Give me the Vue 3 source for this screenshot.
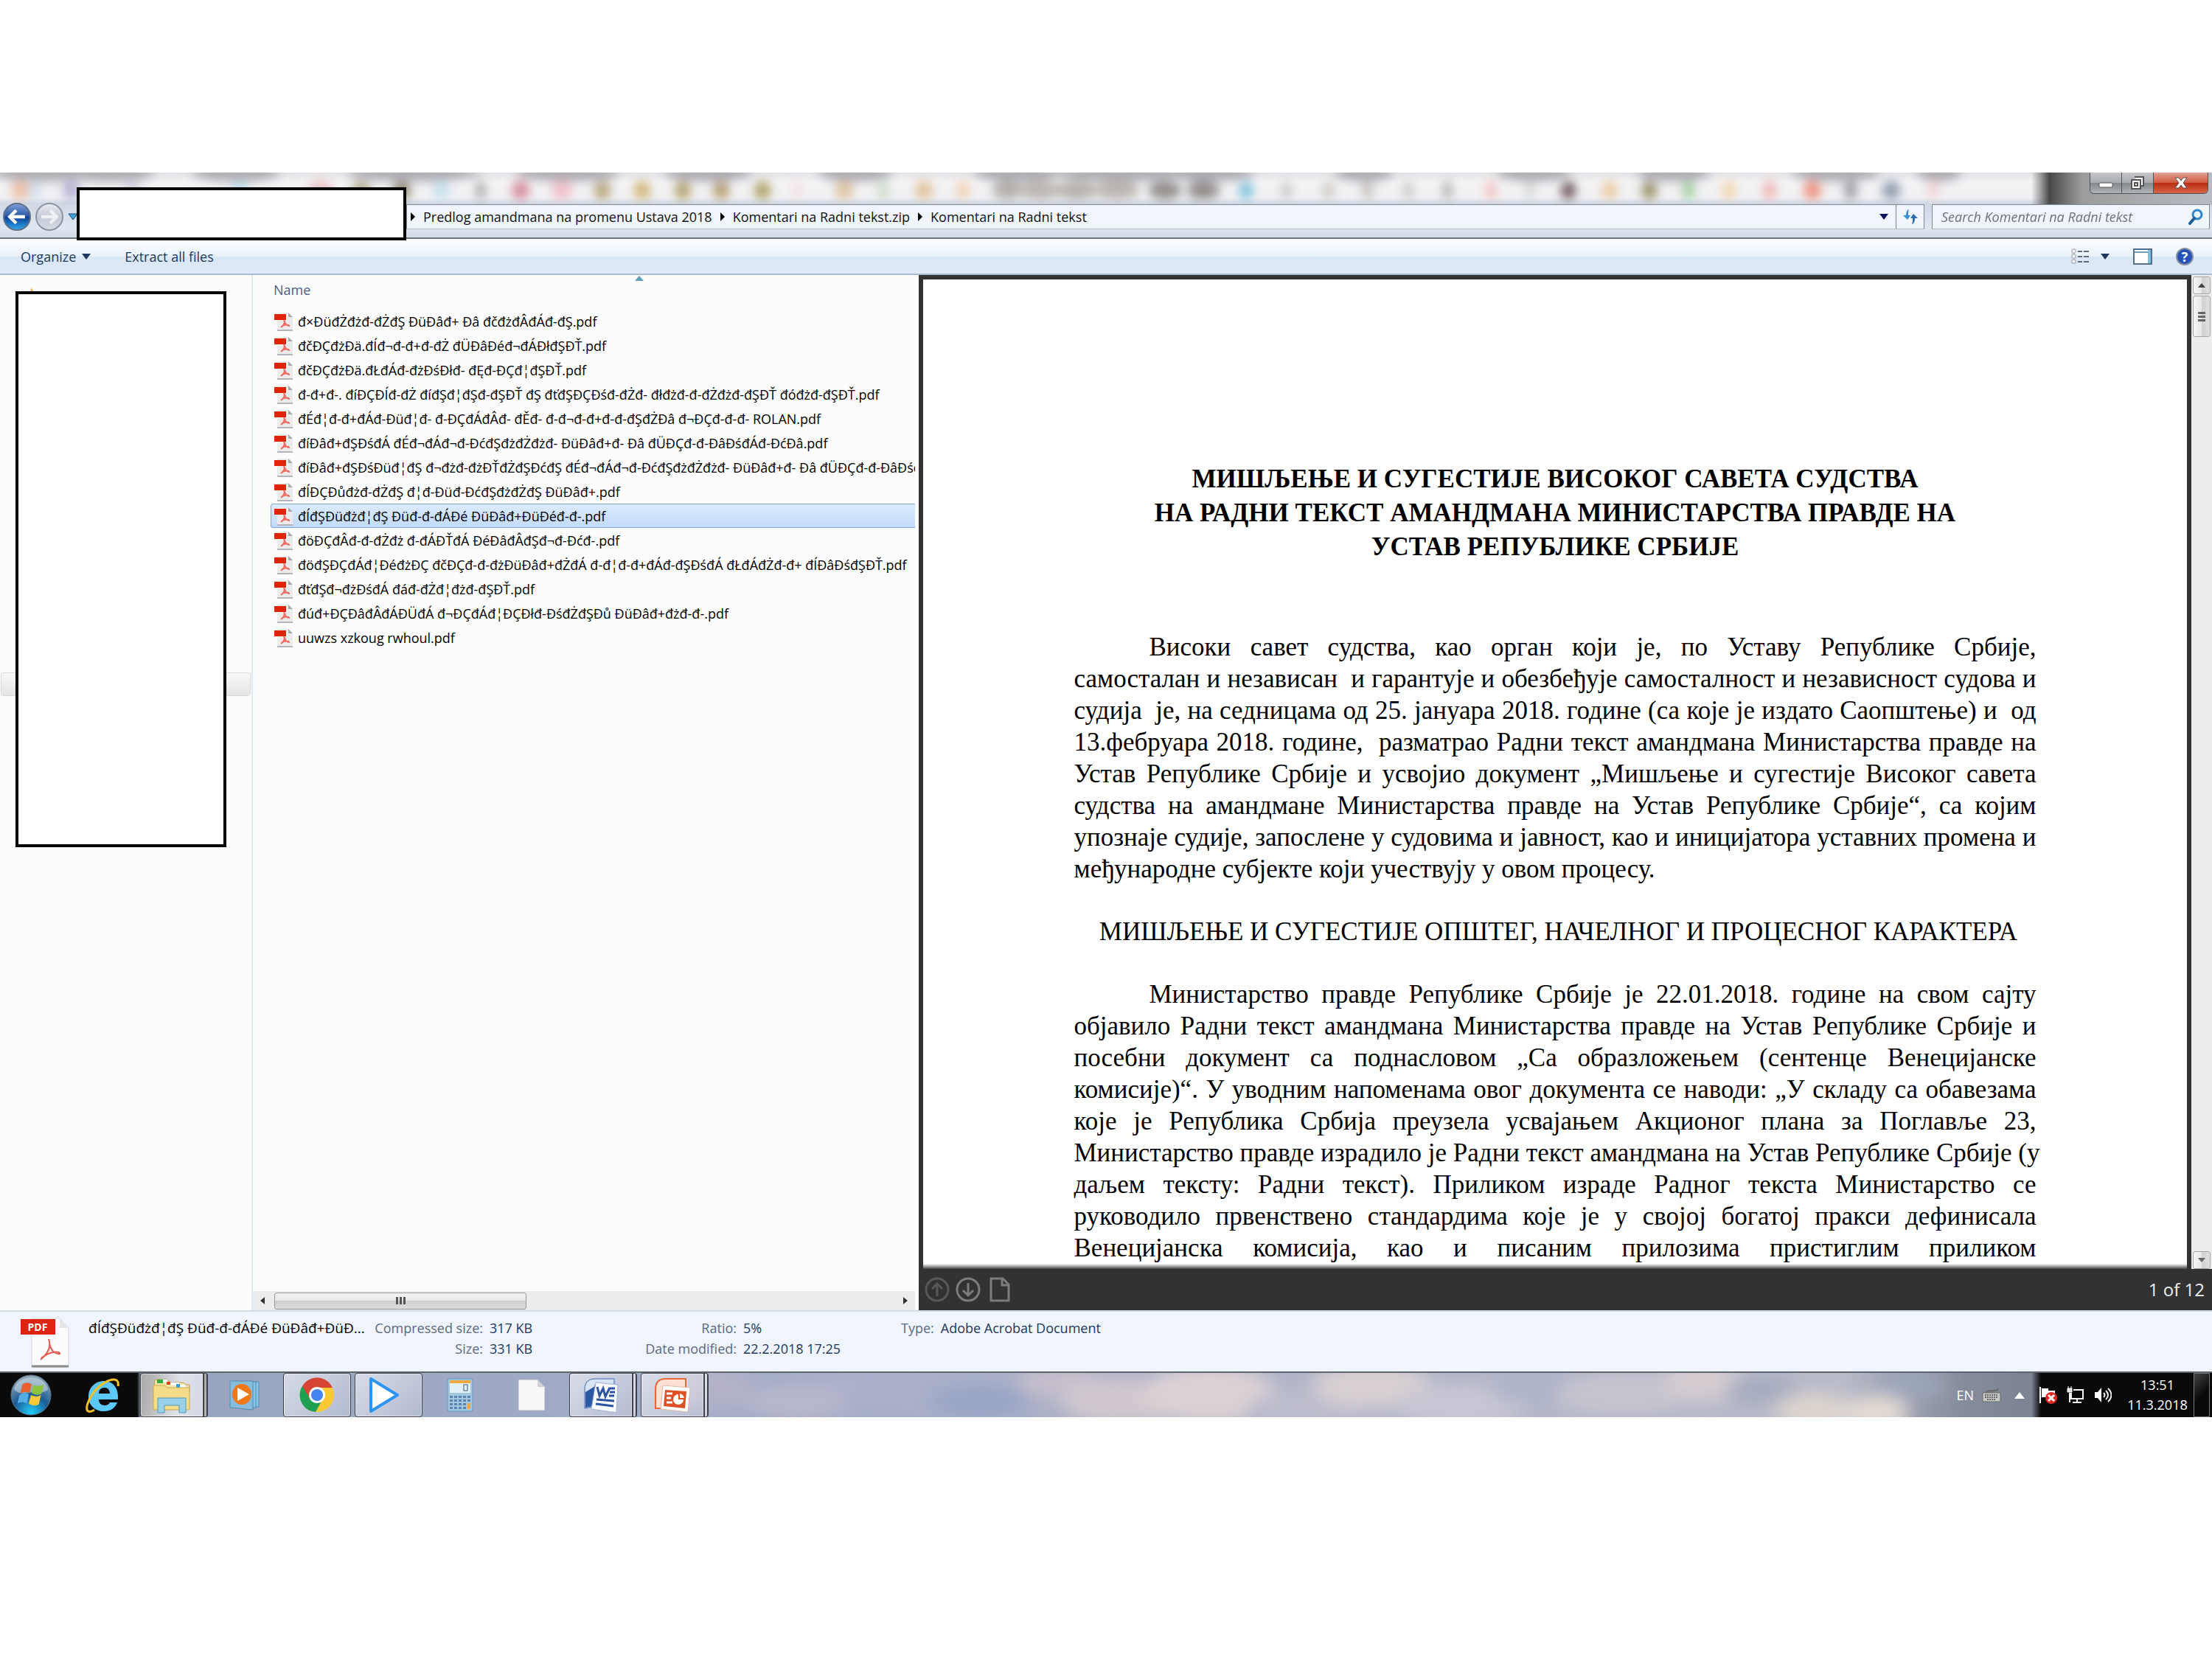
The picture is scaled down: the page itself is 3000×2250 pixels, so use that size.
<script setup>
import { ref } from 'vue';

const crumbs = ['Predlog amandmana na promenu Ustava 2018', 'Komentari na Radni tekst.zip', 'Komentari na Radni tekst'];

const files = [
    'đ×ĐüđŻđżđ-đŻđŞ ĐüĐâđ+ Đâ đčđżđÂđÁđ-đŞ.pdf',
    'đčĐÇđżĐä.đÍđ¬đ-đ+đ-đŻ đÜĐâĐéđ¬đÁĐłđŞĐŤ.pdf',
    'đčĐÇđżĐä.đŁđÁđ-đżĐśĐłđ- đĘđ-ĐÇđ¦đŞĐŤ.pdf',
    'đ-đ+đ-. đíĐÇĐÍđ-đŻ đíđŞđ¦đŞđ-đŞĐŤ đŞ đťđŞĐÇĐśđ-đŻđ- đłđżđ-đ-đŻđżđ-đŞĐŤ đóđżđ-đŞĐŤ.pdf',
    'đÉđ¦đ-đ+đÁđ-Đüđ¦đ- đ-ĐÇđÁđÂđ- đĚđ- đ-đ¬đ-đ+đ-đ-đŞđŻĐâ đ¬ĐÇđ-đ-đ- ROLAN.pdf',
    'đíĐâđ+đŞĐśđÁ đÉđ¬đÁđ¬đ-ĐćđŞđżđŻđżđ- ĐüĐâđ+đ- Đâ đÜĐÇđ-đ-ĐâĐśđÁđ-ĐćĐâ.pdf',
    'đíĐâđ+đŞĐśĐüđ¦đŞ đ¬đżđ-đżĐŤđŻđŞĐćđŞ đÉđ¬đÁđ¬đ-ĐćđŞđżđŻđżđ- ĐüĐâđ+đ- Đâ đÜĐÇđ-đ-ĐâĐśđÁđ-ĐćĐâ.pdf',
    'đÍĐÇĐůđżđ-đŻđŞ đ¦đ-Đüđ-ĐćđŞđżđŻđŞ ĐüĐâđ+.pdf',
    'đÍđŞĐüđżđ¦đŞ Đüđ-đ-đÁĐé ĐüĐâđ+ĐüĐéđ-đ-.pdf',
    'đöĐÇđÂđ-đ-đŻđż đ-đÁĐŤđÁ ĐéĐâđÂđŞđ¬đ-Đćđ-.pdf',
    'đöđŞĐÇđÁđ¦ĐéđżĐÇ đčĐÇđ-đ-đżĐüĐâđ+đŻđÁ đ-đ¦đ-đ+đÁđ-đŞĐśđÁ đŁđÁđŻđ-đ+ đÍĐâĐśđŞĐŤ.pdf',
    'đťđŞđ¬đżĐśđÁ đáđ-đŻđ¦đżđ-đŞĐŤ.pdf',
    'đúđ+ĐÇĐâđÂđÁĐÜđÁ đ¬ĐÇđÁđ¦ĐÇĐłđ-ĐśđŻđŞĐů ĐüĐâđ+đżđ-đ-.pdf',
    'uuwzs xzkoug rwhoul.pdf',
];
const selected = ref(8);

const titleLines = [
    'МИШЉЕЊЕ И СУГЕСТИЈЕ ВИСОКОГ САВЕТА СУДСТВА',
    'НА РАДНИ ТЕКСТ АМАНДМАНА МИНИСТАРСТВА ПРАВДЕ НА',
    'УСТАВ РЕПУБЛИКЕ СРБИЈЕ',
];
// Paragraphs keep the line breaks of the PDF page
const introLines = [
    'Високи савет судства, као орган који је, по Уставу Републике Србије,',
    'самосталан и независан \u00a0и гарантује и обезбеђује самосталност и независност судова и',
    'судија \u00a0је, на седницама од 25. јануара 2018. године (са које је издато Саопштење) и \u00a0од',
    '13.фебруара 2018. године, \u00a0разматрао Радни текст амандмана Министарства правде на',
    'Устав Републике Србије и усвојио документ „Мишљење и сугестије Високог савета',
    'судства на амандмане Министарства правде на Устав Републике Србије“, са којим',
    'упознаје судије, запослене у судовима и јавност, као и иницијатора уставних промена и',
    'међународне субјекте који учествују у овом процесу.',
];
const bodyLines = [
    'Министарство правде Републике Србије је 22.01.2018. године на свом сајту',
    'објавило Радни текст амандмана Министарства правде на Устав Републике Србије и',
    'посебни документ са поднасловом „Са образложењем (сентенце Венецијанске',
    'комисије)“. У уводним напоменама овог документа се наводи: „У складу са обавезама',
    'које је Република Србија преузела усвајањем Акционог плана за Поглавље 23,',
    'Министарство правде израдило је Радни текст амандмана на Устав Републике Србије (у',
    'даљем тексту: Радни текст). Приликом израде Радног текста Министарство се',
    'руководило првенствено стандардима које је у својој богатој пракси дефинисала',
    'Венецијанска комисија, као и писаним прилозима пристиглим приликом',
];

// Colours showing through the glass title bar: [x, rx, colour]
const glassSpots = [
    [28, 12, '#e8b090'], [48, 8, '#c4dcec'], [97, 12, '#a8a4cc'], [180, 10, '#c8c8dc'], [325, 12, '#b8dce8'],
    [435, 16, '#eab4b4'], [490, 12, '#a09870'], [545, 12, '#78704c'], [598, 11, '#bcdcea'], [652, 6, '#8c8c8c'],
    [706, 12, '#d07488'], [762, 14, '#f0b4c0'], [817, 11, '#a8925c'], [871, 11, '#c8a858'], [926, 11, '#a89250'],
    [978, 11, '#a88c50'], [1034, 11, '#9c9048'], [1082, 7, '#f4dcdc'], [1145, 12, '#d8b88c'], [1198, 9, '#c4d8c0'],
    [1253, 12, '#dcb888'], [1306, 9, '#f0c8a4'], [1366, 20, '#a4a09a'], [1410, 28, '#aca8a2'], [1460, 28, '#a8a49c'],
    [1515, 30, '#aca8a0'], [1580, 22, '#7c7874'], [1632, 22, '#7c7874'], [1690, 9, '#5cb4d4'], [1745, 6, '#b4b4b4'],
    [1802, 8, '#c4c0b8'], [1855, 8, '#bcb8b0'], [1910, 7, '#c0bcb8'], [1963, 7, '#a8a4a0'], [2022, 8, '#f4b8b4'],
    [2075, 5, '#c0c8c0'], [2127, 10, '#54383c'], [2183, 11, '#e8c494'], [2237, 11, '#88804c'], [2290, 9, '#90c890'],
    [2345, 10, '#f0d0a0'], [2400, 8, '#ec9c98'], [2458, 12, '#ec7c64'], [2510, 9, '#88848c'], [2565, 12, '#74889c'],
    [2622, 7, '#f0c8cc'],
];
const glassShades = [[60, 70], [150, 60], [320, 60], [560, 90], [770, 70], [960, 60], [1160, 50], [1380, 60], [1520, 90], [1640, 60], [1850, 40], [2080, 50], [2270, 50], [2490, 60], [2630, 30]];

// Clouds of the wallpaper behind the taskbar: [x, y, rx, ry, colour]
const clouds = [
    [960, 20, 60, 30, '#b4b2c8'], [1080, 40, 70, 22, '#b8b8cc'], [1180, 16, 60, 16, '#acb0cc'], [1330, 40, 70, 24, '#9aa6c6'],
    [1440, 14, 60, 20, '#c8c0cc'], [1520, 40, 80, 32, '#d0c8ce'], [1640, 30, 90, 40, '#dcd2d4'], [1770, 50, 80, 26, '#bcbccc'],
    [1860, 18, 80, 32, '#d8d0d2'], [1980, 46, 90, 30, '#c8c6d2'], [2090, 20, 70, 26, '#aeb4ca'], [2200, 30, 90, 30, '#c6c4ce'],
    [2310, 12, 56, 28, '#d4ccd0'], [2390, 24, 50, 18, '#a4aac0'], [2460, 54, 54, 26, '#dcd4ce'], [2545, 56, 44, 24, '#e4dcd4'],
    [2590, 16, 50, 16, '#9ca6bc'],
];
</script>

<template>
    <main class="desktop">
        <section class="window">
            <header class="glass">
                <svg class="glass-art" viewBox="0 0 3000 44" preserveAspectRatio="none" aria-hidden="true">
                    <defs>
                        <filter id="soft" x="-5%" y="-50%" width="110%" height="200%"><feGaussianBlur stdDeviation="7" /></filter>
                        <filter id="haze" x="-5%" y="-50%" width="110%" height="200%"><feGaussianBlur stdDeviation="12" /></filter>
                        <linearGradient id="photo" x1="0" x2="1" y1="0" y2="0">
                            <stop offset="0" stop-color="#555" stop-opacity="0" />
                            <stop offset="0.1" stop-color="#484848" />
                            <stop offset="0.28" stop-color="#9c9c9c" />
                            <stop offset="1" stop-color="#b8bcc2" />
                        </linearGradient>
                    </defs>
                    <g filter="url(#soft)">
                        <ellipse v-for="s in glassShades" :key="s[0]" :cx="s[0]" cy="0" :rx="s[1]" ry="12" fill="#aeacb2" />
                        <ellipse v-for="s in glassSpots" :key="s[0]" :cx="s[0]" cy="24" :rx="s[1]" ry="13" :fill="s[2]" opacity="0.8" />
                    </g>
                    <rect x="2755" y="0" width="245" height="44" fill="url(#photo)" />
                </svg>
                <div class="controls">
                    <button type="button" class="ctl min" aria-label="Minimize">
                        <svg viewBox="0 0 20 20" width="20" height="20"><rect x="1" y="10" width="18" height="6" rx="1" fill="#fff" stroke="#555" /></svg>
                    </button>
                    <button type="button" class="ctl max" aria-label="Restore">
                        <svg viewBox="0 0 20 20" width="20" height="20"><path d="M6 2h12v12h-4M2 6h12v12H2zM6 10h4v4H6z" fill="#fff" stroke="#555" stroke-width="2" /></svg>
                    </button>
                    <button type="button" class="ctl close" aria-label="Close">
                        <svg viewBox="0 0 20 20" width="20" height="20"><path d="M2 3h5l3 4 3-4h5l-5 7 5 7h-5l-3-4-3 4H2l5-7z" fill="#fff" stroke="#5a4a50" stroke-width="1" /></svg>
                    </button>
                </div>
                <div class="navbar">
                    <div class="history">
                        <button type="button" class="round back" aria-label="Back">
                            <svg viewBox="0 0 24 24" width="26" height="26"><path d="M11 4 3 12l8 8M4 12h18" fill="none" stroke="#fff" stroke-width="4" /></svg>
                        </button>
                        <button type="button" class="round forward" aria-label="Forward">
                            <svg viewBox="0 0 24 24" width="26" height="26"><path d="m13 4 8 8-8 8M20 12H2" fill="none" stroke="#eef0f4" stroke-width="4" /></svg>
                        </button>
                        <svg class="recent" viewBox="0 0 14 10" width="14" height="10"><path d="M1 1h12L7 9z" fill="#3fa0d8" stroke="#1c4c74" /></svg>
                    </div>
                    <nav class="address">
                        <template v-for="crumb in crumbs" :key="crumb">
                            <svg viewBox="0 0 8 12" width="8" height="12"><path d="M1 0l6 6-6 6z" fill="#000" /></svg>
                            <a href="#">{{ crumb }}</a>
                        </template>
                        <svg class="drop" viewBox="0 0 12 8" width="12" height="8"><path d="M0 0h12L6 8z" fill="#0c1160" /></svg>
                        <button type="button" class="refresh" aria-label="Refresh">
                            <svg viewBox="0 0 24 24" width="24" height="24"><path d="M10 2C7 3 6 6 6 10H2l6 6 4-6H9c0-3 0-6 1-8z" fill="#3d8fd0" /><path d="M14 22c3-1 4-4 4-8h4l-6-6-4 6h3c0 3 0 6-1 8z" fill="#2a6cae" /></svg>
                        </button>
                    </nav>
                    <label class="search">
                        <input type="text" placeholder="Search Komentari na Radni tekst" aria-label="Search Komentari na Radni tekst" />
                        <svg viewBox="0 0 22 22" width="22" height="22"><circle cx="13" cy="8" r="6" fill="#e8f4fc" stroke="#2e86c8" stroke-width="3" /><path d="M9 13l-6 7" stroke="#1f5c9c" stroke-width="4" stroke-linecap="round" /></svg>
                    </label>
                </div>
                <div class="mask mask-path"></div>
            </header>

            <div class="toolbar">
                <button type="button">Organize <svg viewBox="0 0 12 8" width="12" height="8"><path d="M0 0h12L6 8z" fill="#1e395b" /></svg></button>
                <button type="button">Extract all files</button>
                <div class="tools">
                    <button type="button" aria-label="Change your view">
                        <svg viewBox="0 0 24 22" width="24" height="22">
                            <g v-for="n in 3" :key="n" fill="#fff" stroke="#8a929c"><rect x="1" :y="n * 7 - 6" width="5" height="5" rx="1" /><path :d="`M9 ${n * 7 - 3}h6m2 0h7`" stroke="#5c6a7c" stroke-width="2" /></g>
                        </svg>
                        <svg viewBox="0 0 12 8" width="12" height="8"><path d="M0 0h12L6 8z" fill="#1e395b" /></svg>
                    </button>
                    <button type="button" aria-label="Preview pane">
                        <svg viewBox="0 0 26 22" width="26" height="22"><rect x="1" y="1" width="24" height="20" fill="#fff" stroke="#54708c" stroke-width="2" /><path d="M2 5h18" stroke="#7f97b0" stroke-width="2" /><path d="M20 2h4v18h-4z" fill="#7cc0e0" /></svg>
                    </button>
                    <button type="button" class="help" aria-label="Help">?</button>
                </div>
            </div>

            <div class="content">
                <aside class="tree">
                    <svg class="star" viewBox="0 0 10 12" width="8" height="12"><path d="M5 0l5 12H0z" fill="#f0a850" /></svg>
                    <div class="tree-item"></div>
                    <div class="mask mask-tree"></div>
                </aside>

                <section class="files">
                    <svg class="sort" viewBox="0 0 12 7" width="12" height="7"><path d="M6 0l6 7H0z" fill="#5f9fb8" /></svg>
                    <table>
                        <thead>
                            <tr><th scope="col">Name</th></tr>
                        </thead>
                        <tbody>
                            <tr v-for="(file, i) in files" :key="file" :class="{ active: i === selected }" @click="selected = i">
                                <td>
                                    <div class="file">
                                        <svg viewBox="0 0 26 26" width="26" height="26">
                                            <path d="M4 1h15l6 6v18H4z" fill="#ecebec" /><path d="M19 1v6h6z" fill="#a8a8ac" /><path d="M4 25h21" stroke="#b4b4bc" stroke-width="2" />
                                            <rect x="0" y="3" width="16" height="8" fill="#e02408" />
                                            <path d="M13 11c2 3 1 6-4 10M14 13c1 4 3 6 7 6M10 20c3-3 6-3 10-2" fill="none" stroke="#ee6a60" stroke-width="2" />
                                        </svg>
                                        <span>{{ file }}</span>
                                    </div>
                                </td>
                            </tr>
                        </tbody>
                    </table>
                    <div class="hscroll">
                        <svg viewBox="0 0 6 10" width="6" height="10"><path d="M6 0v10L0 5z" fill="#333" /></svg>
                        <div class="hthumb"><i></i><i></i><i></i></div>
                        <svg viewBox="0 0 6 10" width="6" height="10"><path d="M0 0v10l6-5z" fill="#333" /></svg>
                    </div>
                </section>

                <section class="preview">
                    <div class="viewer">
                        <article class="page">
                            <h1><span v-for="line in titleLines" :key="line">{{ line }}</span></h1>
                            <p><span v-for="line in introLines" :key="line">{{ line }}</span></p>
                            <h2>&nbsp;МИШЉЕЊЕ И СУГЕСТИЈЕ ОПШТЕГ, НАЧЕЛНОГ И ПРОЦЕСНОГ КАРАКТЕРА</h2>
                            <p class="full"><span v-for="line in bodyLines" :key="line">{{ line }}</span></p>
                        </article>
                        <div class="vscroll">
                            <div class="vbtn"><svg viewBox="0 0 10 6" width="10" height="6"><path d="M5 0l5 6H0z" fill="#444" /></svg></div>
                            <div class="vthumb"><i></i><i></i><i></i></div>
                            <div class="vbtn last"><svg viewBox="0 0 10 6" width="10" height="6"><path d="M0 0h10L5 6z" fill="#666" /></svg></div>
                        </div>
                    </div>
                    <footer class="pager">
                        <button type="button" class="dim" aria-label="Previous page">
                            <svg viewBox="0 0 34 34" width="34" height="34"><circle cx="17" cy="17" r="15" /><path d="M17 26V9M10 16l7-7 7 7" /></svg>
                        </button>
                        <button type="button" aria-label="Next page">
                            <svg viewBox="0 0 34 34" width="34" height="34"><circle cx="17" cy="17" r="15" /><path d="M17 8v17M10 18l7 7 7-7" /></svg>
                        </button>
                        <button type="button" aria-label="Page view">
                            <svg viewBox="0 0 34 34" width="34" height="34"><path d="M6 2h16l8 8v22H6zM21 2v9h9" /></svg>
                        </button>
                        <span class="count">1 of 12</span>
                    </footer>
                </section>
            </div>

            <footer class="details">
                <svg class="big-pdf" viewBox="0 0 66 68" width="66" height="68">
                    <path d="M15 1h38l12 13v53H15z" fill="#fcfcfc" stroke="#d8d8d8" /><path d="M53 1v13h12z" fill="#e4e4e4" /><path d="M15 66h50" stroke="#8c8c8c" stroke-width="3" />
                    <rect x="0" y="2" width="47" height="21" fill="#dc2410" />
                    <text x="23" y="18" text-anchor="middle" font-size="14" font-weight="700" fill="#fff">PDF</text>
                    <path d="M38 29c3 8 1 18-11 28M39 35c2 10 8 15 14 14 1-4-13-4-25 6" fill="none" stroke="#e85850" stroke-width="2" />
                </svg>
                <span class="d-name">đÍđŞĐüđżđ¦đŞ Đüđ-đ-đÁĐé ĐüĐâđ+ĐüĐ...</span>
                <dl class="d-size">
                    <dt>Compressed size:</dt><dd>317 KB</dd>
                    <dt>Size:</dt><dd>331 KB</dd>
                </dl>
                <dl class="d-date">
                    <dt>Ratio:</dt><dd>5%</dd>
                    <dt>Date modified:</dt><dd>22.2.2018 17:25</dd>
                </dl>
                <dl class="d-type">
                    <dt>Type:</dt><dd>Adobe Acrobat Document</dd>
                </dl>
            </footer>
        </section>

        <footer class="taskbar">
            <svg class="wallpaper" viewBox="0 0 3000 62" preserveAspectRatio="none" aria-hidden="true">
                <g filter="url(#haze)"><ellipse v-for="c in clouds" :key="c[0]" :cx="c[0]" :cy="c[1]" :rx="c[2]" :ry="c[3]" :fill="c[4]" /></g>
            </svg>
            <button type="button" class="start" aria-label="Start">
                <svg viewBox="0 0 60 60" width="58" height="58">
                    <defs><radialGradient id="orb" cx="0.5" cy="0.95" r="0.9"><stop offset="0" stop-color="#20d0fc" /><stop offset="0.5" stop-color="#1c5c94" /><stop offset="1" stop-color="#8ca4b4" /></radialGradient></defs>
                    <circle cx="30" cy="30" r="28" fill="url(#orb)" stroke="#5c7080" />
                    <path d="M6 22C12 0 48 0 54 22c-8 8-16 2-24 4-8 2-16 4-24-4z" fill="#dce8f0" opacity="0.5" />
                    <path d="M18 15c5-3 8-3 13 0l-3 12c-4-2-9-2-13 1z" fill="#e8602c" /><path d="M33 16c5 2 10 2 15-1l-3 13c-5 3-10 2-14-1z" fill="#8cc43c" />
                    <path d="M14 30c4-3 9-3 13-1l-3 13c-4-3-9-3-13 0z" fill="#54ace8" /><path d="M30 30c5 2 9 3 14 0l-3 13c-4 3-10 2-14-1z" fill="#fcc83c" />
                </svg>
            </button>
            <button type="button" class="app" aria-label="Internet Explorer">
                <svg viewBox="0 0 50 50" width="50" height="50">
                    <path d="M46 31H20c0 5 3 8 8 8 4 0 6-2 7-4h10c-3 8-9 12-18 12C15 47 6 39 6 27S15 6 27 6s20 9 19 25zM20 23h15c0-5-3-8-7-8-5 0-8 3-8 8z" fill="#5cc8f8" />
                    <path d="M46 13C49-2 30 3 16 18 4 32 1 46 6 47c2 1 5 0 8-2" fill="none" stroke="#f4c020" stroke-width="3" />
                </svg>
            </button>
            <button type="button" class="app open stacked current" aria-label="Windows Explorer">
                <svg viewBox="0 0 54 50" width="54" height="50">
                    <path d="M4 4h16l5 4h18l3 3h5v10H2z" fill="#f4e4a4" stroke="#b89c50" /><path d="M7 4h8v5H7z" fill="#30b040" /><path d="M15 4h6v4h-6zM25 8h12v4H25zM38 11h8v4h-8z" fill="#fff" /><path d="M20 7h5v4h-5z" fill="#d84820" /><path d="M33 10h5v5h-5z" fill="#3c9cd8" />
                    <path d="M2 12h16l3 3h30v30H2z" fill="#f4dc88" stroke="#c8a850" />
                    <path d="M8 49V29h38v20h-9V39H17v10z" fill="#98d0e8" stroke="#4c9cc0" />
                </svg>
            </button>
            <button type="button" class="app" aria-label="Media Player">
                <svg viewBox="0 0 44 42" width="44" height="42"><path d="M12 3h28v34H12z" fill="#8cc4e4" stroke="#4c8cb4" /><path d="M7 3h29v35H7z" fill="#8cc4e4" stroke="#4c8cb4" /><path d="M1 2h31v39L1 38z" fill="#88bcdc" stroke="#4c88b4" /><ellipse cx="17" cy="20" rx="13" ry="14" fill="#f07818" /><path d="M11 11l16 9-16 9z" fill="#fff" /></svg>
            </button>
            <button type="button" class="app open" aria-label="Chrome">
                <svg viewBox="0 0 48 48" width="48" height="48">
                    <circle cx="24" cy="24" r="23" fill="#fcc934" /><path d="M4 12a23 23 0 0 0 18 35l10-18-8-5z" fill="#1ea050" /><path d="M4 12l11 18 9-16h21A23 23 0 0 0 4 12z" fill="#d84434" />
                    <circle cx="24" cy="24" r="11" fill="#fff" /><circle cx="24" cy="24" r="8" fill="#4484f0" />
                </svg>
            </button>
            <button type="button" class="app open" aria-label="Player">
                <svg viewBox="4 0 52 50" width="52" height="50"><path d="M6 3l36 22L6 47z" fill="#fff" stroke="#2c94f4" stroke-width="4" stroke-linejoin="round" /></svg>
            </button>
            <button type="button" class="app" aria-label="Calculator">
                <svg viewBox="0 0 36 46" width="36" height="46">
                    <rect x="1" y="1" width="34" height="44" rx="3" fill="#a4c8e0" stroke="#5c94bc" /><rect x="4" y="3" width="28" height="4" fill="#f0a840" /><rect x="4" y="7" width="28" height="13" fill="#e4f0f8" /><rect x="23" y="9" width="5" height="8" fill="none" stroke="#345c80" />
                    <g v-for="r in 4" :key="r" fill="#5c84b0"><rect v-for="c in 5" :key="c" :x="c * 6 - 2" :y="r * 5 + 19" width="4" height="3" /></g>
                    <rect x="28" y="34" width="4" height="8" fill="#f0a840" />
                </svg>
            </button>
            <button type="button" class="app" aria-label="Document">
                <svg viewBox="0 0 36 42" width="36" height="42"><path d="M0 0h26l10 10v32H0z" fill="#f8f8f8" stroke="#b4b4bc" /><path d="M26 0v10h10z" fill="#d0d0d4" /></svg>
            </button>
            <button type="button" class="app open stacked" aria-label="Word">
                <svg viewBox="0 0 48 48" width="48" height="48">
                    <path d="M2 42V16C2 6 8 2 16 2h26v8H16l-3 30z" fill="#d8e4f4" stroke="#3c68ac" /><path d="M3 41V20l13-8-3 27z" fill="#2c58a4" />
                    <path d="M17 7l30 3-2 38-34-5z" fill="#f8fafe" stroke="#9cb0d0" /><path d="M19 13l3 12 5-10 3 11 6-12" fill="none" stroke="#2c54a4" stroke-width="3" /><path d="M36 15h7M36 20h7M35 25h7M18 30l24 2M17 36l24 3" stroke="#2c54a4" stroke-width="3" />
                </svg>
            </button>
            <button type="button" class="app open stacked" aria-label="PowerPoint">
                <svg viewBox="0 0 50 48" width="50" height="48">
                    <path d="M2 42V16C2 6 8 2 16 2h27v12H13l-3 28z" fill="#fce0d4" stroke="#e86838" stroke-width="2" /><path d="M12 11l37 3-3 33-37-4z" fill="#fff" stroke="#e0b8a8" /><path d="M15 17l29 2-2 23-29-3z" fill="#dc5024" />
                    <path d="M17 22h8M17 28h6M17 34h8" stroke="#fff" stroke-width="3" /><circle cx="33" cy="30" r="7" fill="#fff" /><path d="M34 29v-8a8 8 0 0 1 8 8z" fill="#fff" stroke="#dc5024" stroke-width="2" />
                </svg>
            </button>

            <div class="lang">
                <span>EN</span>
                <svg viewBox="0 0 26 20" width="26" height="20"><path d="M6 7c0-6 14 1 16-6" fill="none" stroke="#666" stroke-width="2" /><rect x="1" y="7" width="24" height="12" rx="1" fill="#c8c8c4" stroke="#666" /><path d="M4 10h18M4 13h18M7 16h12" stroke="#666" stroke-width="2" stroke-dasharray="2 1" /></svg>
                <svg viewBox="0 0 14 9" width="14" height="9"><path d="M7 0l7 9H0z" fill="#fff" /></svg>
            </div>
            <div class="tray">
                <svg viewBox="0 0 24 24" width="24" height="24"><path d="M1 1v22" stroke="#fff" stroke-width="2" /><path d="M3 3h9v3h9v9H3z" fill="#fff" /><circle cx="16" cy="16" r="8" fill="#dc2820" /><path d="M12 12l8 8m0-8l-8 8" stroke="#fff" stroke-width="3" /></svg>
                <svg viewBox="0 0 24 24" width="24" height="24"><path d="M9 5h13v12H6V9M14 17v4M8 22h12M4 9v13" fill="none" stroke="#f4f4f4" stroke-width="2" /><path d="M1 3h6v5H1zM2 0v3M6 0v3" fill="#ddd" stroke="#fff" /></svg>
                <svg viewBox="0 0 24 24" width="24" height="24"><path d="M1 8h4l5-6v20l-5-6H1z" fill="#fff" /><path d="M13 9c2 2 2 4 0 6M16 6c4 4 4 8 0 12M19 3c6 6 6 12 0 18" fill="none" stroke="#eee" stroke-width="2" /></svg>
                <time class="clock"><span>13:51</span><span>11.3.2018</span></time>
                <button type="button" class="peek" aria-label="Show desktop"></button>
            </div>
        </footer>
    </main>
</template>

<style>
body {
    background: #fff;
}
</style>

<style scoped>
.desktop {
    padding: 234px 0;
    font-family: 'Open Sans', 'Noto Sans', sans-serif;
    font-size: 18px;
    line-height: 24px;
    color: #000;
}

button {
    padding: 0;
    border: 0;
    background: none;
    font: inherit;
    color: inherit;
}

svg {
    display: block;
    flex: none;
}

.mask {
    position: absolute;
    box-sizing: border-box;
    border: 4px solid #000;
    background: #fff;
}

/* Title bar */
.glass {
    position: relative;
    display: flex;
    flex-direction: column;
    height: 90px;
    background: linear-gradient(#e4e4e8, #f4f3f5 14px, #f0f0f3 34px, #cfd8e4 42px, #dfe7f1 76px, #d3dce8 84px);
    border-bottom: 2px solid #6c747e;
    box-sizing: border-box;
}

.glass-art {
    position: absolute;
    top: 0;
    left: 0;
    width: 100%;
    height: 44px;
}

.controls {
    position: relative;
    display: flex;
    align-self: flex-end;
    height: 29px;
    margin-right: 5px;
    border: 1px solid #50545a;
    border-top: 0;
    border-radius: 0 0 6px 6px;
    overflow: hidden;
    box-sizing: border-box;
}

.ctl {
    display: flex;
    align-items: center;
    justify-content: center;
    width: 43px;
    background: linear-gradient(#c4c6c9, #a9acb0 50%, #84878c 50%, #b0b3b8);
    border-right: 1px solid #50545a;
}

.ctl.close {
    width: 73px;
    border-right: 0;
    background: linear-gradient(#e4a494, #d0583c 50%, #b82c10 50%, #d86448);
}

.navbar {
    position: relative;
    display: flex;
    align-items: center;
    margin-top: 13px;
    height: 36px;
}

.history {
    display: flex;
    align-items: center;
    gap: 6px;
    width: 551px;
    padding-left: 4px;
    box-sizing: border-box;
}

.round {
    display: flex;
    align-items: center;
    justify-content: center;
    width: 38px;
    height: 38px;
    box-sizing: border-box;
    border: 2px solid #5f6f86;
    border-radius: 50%;
}

.back {
    background: linear-gradient(#7c9cd4, #2858a8 48%, #0c3c94 50%, #2ca4e8);
}

.forward {
    background: linear-gradient(#e8ecf0, #c4cad4 50%, #d4dae2);
    border-color: #8c949e;
}

.address,
.search {
    display: flex;
    align-items: center;
    height: 34px;
    box-sizing: border-box;
    background: #f0f5fb;
    border: 1px solid #7f868e;
    border-bottom-color: #b4bcc6;
}

.address {
    flex: 1;
    gap: 10px;
    padding-left: 4px;
}

.address a {
    color: #111;
    text-decoration: none;
    white-space: nowrap;
}

.address .drop {
    margin-left: auto;
}

.refresh {
    display: flex;
    align-items: center;
    justify-content: center;
    width: 38px;
    height: 32px;
    border-left: 1px solid #7f868e;
}

.search {
    width: 377px;
    margin: 0 3px 0 10px;
    padding: 0 7px 0 12px;
}

.search input {
    flex: 1;
    min-width: 0;
    padding: 0;
    border: 0;
    background: none;
    font: inherit;
    font-style: italic;
    color: #6d7278;
}

.search input::placeholder {
    color: #6d7278;
    opacity: 1;
}

.mask-path {
    top: 20px;
    left: 104px;
    width: 447px;
    height: 72px;
}

/* Command bar */
.toolbar {
    display: flex;
    align-items: center;
    gap: 46px;
    height: 49px;
    padding: 0 25px 0 28px;
    box-sizing: border-box;
    background: linear-gradient(#fff, #e8f2fc 50%, #d9e6f4 50%, #deeafa);
    border-bottom: 2px solid #a9bacb;
    color: #1e395b;
}

.toolbar button {
    display: flex;
    align-items: center;
    gap: 8px;
}

.tools {
    display: flex;
    align-items: center;
    gap: 32px;
    margin-left: auto;
}

.tools button:first-child {
    gap: 16px;
}

.toolbar .help {
    justify-content: center;
    width: 24px;
    height: 24px;
    border: 2px solid #8890a0;
    border-radius: 50%;
    box-sizing: border-box;
    background: #2450b8;
    color: #fff;
    font-weight: 700;
    line-height: 20px;
}

/* Content */
.content {
    display: grid;
    grid-template-columns: 343px 903px minmax(0, 1fr);
    background: #fcfcfc;
}

.tree {
    position: relative;
    border-right: 2px solid #e0e8f0;
}

.star {
    position: absolute;
    top: 16px;
    left: 39px;
}

.tree-item {
    height: 32px;
    margin: 539px 1px 0;
    border: 1px solid #d9d9d9;
    border-radius: 4px;
    box-sizing: border-box;
    background: linear-gradient(#f8f8f8, #e4e4e4);
}

.mask-tree {
    top: 22px;
    left: 21px;
    width: 286px;
    height: 754px;
}

.files {
    position: relative;
    display: flex;
    flex-direction: column;
    padding-right: 5px;
}

.sort {
    position: absolute;
    top: 1px;
    left: 518px;
}

table {
    width: 100%;
    table-layout: fixed;
    border-spacing: 0;
}

th {
    height: 40px;
    padding: 0 0 6px 28px;
    text-align: left;
    font-weight: 400;
    color: #4c607a;
}

td {
    padding: 0 0 0 24px;
}

.file {
    display: flex;
    align-items: center;
    gap: 6px;
    height: 33px;
    padding-left: 4px;
    box-sizing: border-box;
    border: 1px solid transparent;
    border-right: 0;
    border-radius: 4px 0 0 4px;
    overflow: hidden;
    white-space: nowrap;
}

.active .file {
    border-color: #84a4cc;
    background: linear-gradient(#dcebfc, #c1dbfc);
}

.hscroll {
    display: flex;
    align-items: center;
    height: 26px;
    margin-top: auto;
    padding: 0 10px;
    background: #ececec;
}

.hthumb {
    display: flex;
    align-items: center;
    justify-content: center;
    gap: 2px;
    width: 342px;
    height: 23px;
    margin: 0 auto 0 13px;
    box-sizing: border-box;
    border: 1px solid #979797;
    border-radius: 3px;
    background: linear-gradient(#f4f4f4, #e6e6e6 50%, #cfcfcf 50%, #dcdcdc);
}

.hthumb i {
    width: 3px;
    height: 10px;
    background: #555;
}

/* Preview */
.preview {
    background: #323232;
}

.viewer {
    display: flex;
}

.page {
    flex: 1;
    margin: 6px 6px 0;
    padding: 248px 0 7px;
    background: linear-gradient(#fff calc(100% - 7px), #444);
    font-family: 'Liberation Serif', serif;
    font-size: 35px;
    line-height: 43px;
}

.page h1,
.page h2,
.page p {
    width: 1305px;
    max-width: 100%;
    margin: 0 auto;
    font-size: 35px;
    white-space: nowrap;
}

.page span {
    display: block;
}

.page h1 {
    line-height: 46px;
    text-align: center;
}

.page h2 {
    margin: 42px auto;
    font-weight: 400;
    text-align: center;
}

.page h1 + p {
    margin-top: 91px;
}

.page p span {
    text-align-last: justify;
}

.page p span:first-child {
    padding-left: 102px;
}

.page p:not(.full) span:last-child {
    text-align-last: left;
}

.vscroll {
    display: flex;
    flex-direction: column;
    gap: 2px;
    width: 28px;
    padding: 2px 2px 0;
    box-sizing: border-box;
    background: #ececec;
}

.vbtn,
.vthumb {
    display: flex;
    flex-direction: column;
    align-items: center;
    justify-content: center;
    height: 24px;
    box-sizing: border-box;
    border: 1px solid #a4a4a4;
    border-radius: 3px;
    background: linear-gradient(90deg, #f6f6f6, #e8e8e8 50%, #d2d2d2 50%, #dedede);
}

.vthumb {
    gap: 2px;
    height: 56px;
}

.vthumb i {
    width: 10px;
    height: 3px;
    background: #666;
}

.vbtn.last {
    margin-top: auto;
}

.pager {
    display: flex;
    align-items: center;
    gap: 8px;
    height: 56px;
    padding: 0 10px 0 8px;
    color: #eee;
    font-size: 24px;
}

.pager svg {
    fill: none;
    stroke: #7c7c7c;
    stroke-width: 3;
}

.pager .dim svg {
    stroke: #585858;
}

.count {
    margin-left: auto;
}

/* Details pane */
.details {
    display: flex;
    align-items: flex-start;
    height: 83px;
    padding: 8px 28px 0;
    box-sizing: border-box;
    border-top: 2px solid #d0dcea;
    background: #f0f4fc;
}

.big-pdf {
    margin-right: 26px;
}

.d-name {
    width: 386px;
    margin-top: 2px;
    font-size: 19px;
    white-space: nowrap;
}

.details dl {
    display: grid;
    grid-template-columns: auto auto;
    column-gap: 9px;
    margin: 0;
    line-height: 28px;
    white-space: nowrap;
}

.details dt {
    color: #5a6a80;
    text-align: right;
}

.details dd {
    margin: 0;
    color: #1e395b;
}

.details .d-size {
    grid-template-columns: 149px auto;
    width: 350px;
}

.details .d-date {
    grid-template-columns: 143px auto;
    width: 366px;
}

/* Taskbar */
.taskbar {
    position: relative;
    display: flex;
    align-items: center;
    height: 62px;
    box-sizing: border-box;
    border-top: 2px solid #5c646c;
    background: linear-gradient(90deg, #0a0a0a 186px, #98a4be 192px, #a2abc8 900px, #aeb2c8 1500px, #b8bac8 2500px, #858c9c 2660px, #7c8494 2755px, #0a0a0a 2768px);
}

.wallpaper {
    position: absolute;
    top: 0;
    left: 0;
    width: 100%;
    height: 100%;
}

.start {
    position: relative;
    width: 84px;
    margin-right: 9px;
}

.start svg,
.app svg {
    margin: 0 auto;
}

.app {
    position: relative;
    width: 92px;
    height: 60px;
    margin-right: 5px;
}

.open {
    border: 1px solid #3c4048;
    border-radius: 4px;
    background: linear-gradient(135deg, rgba(255, 255, 255, 0.6), rgba(255, 255, 255, 0.2));
    box-shadow: inset 0 0 0 1px rgba(255, 255, 255, 0.5);
}

.stacked {
    border-right-width: 7px;
    border-right-style: double;
}

.current {
    background: linear-gradient(100deg, #a8a8a8, #b8b8b8 20%, #e0e2ea 60%, #d4d8e4);
}

.lang,
.tray {
    position: relative;
    display: flex;
    align-items: center;
    color: #fff;
}

.lang {
    gap: 18px;
    margin-left: auto;
    margin-right: 20px;
}

.lang span {
    margin-right: -7px;
}

.tray svg {
    margin-right: 13px;
}

.clock {
    display: flex;
    flex-direction: column;
    align-items: center;
    width: 98px;
    line-height: 27px;
}

.peek {
    width: 22px;
    height: 60px;
    margin-right: 3px;
    border: 1px solid #777;
    background: linear-gradient(135deg, #444, #0a0a0a 50%);
}
</style>
